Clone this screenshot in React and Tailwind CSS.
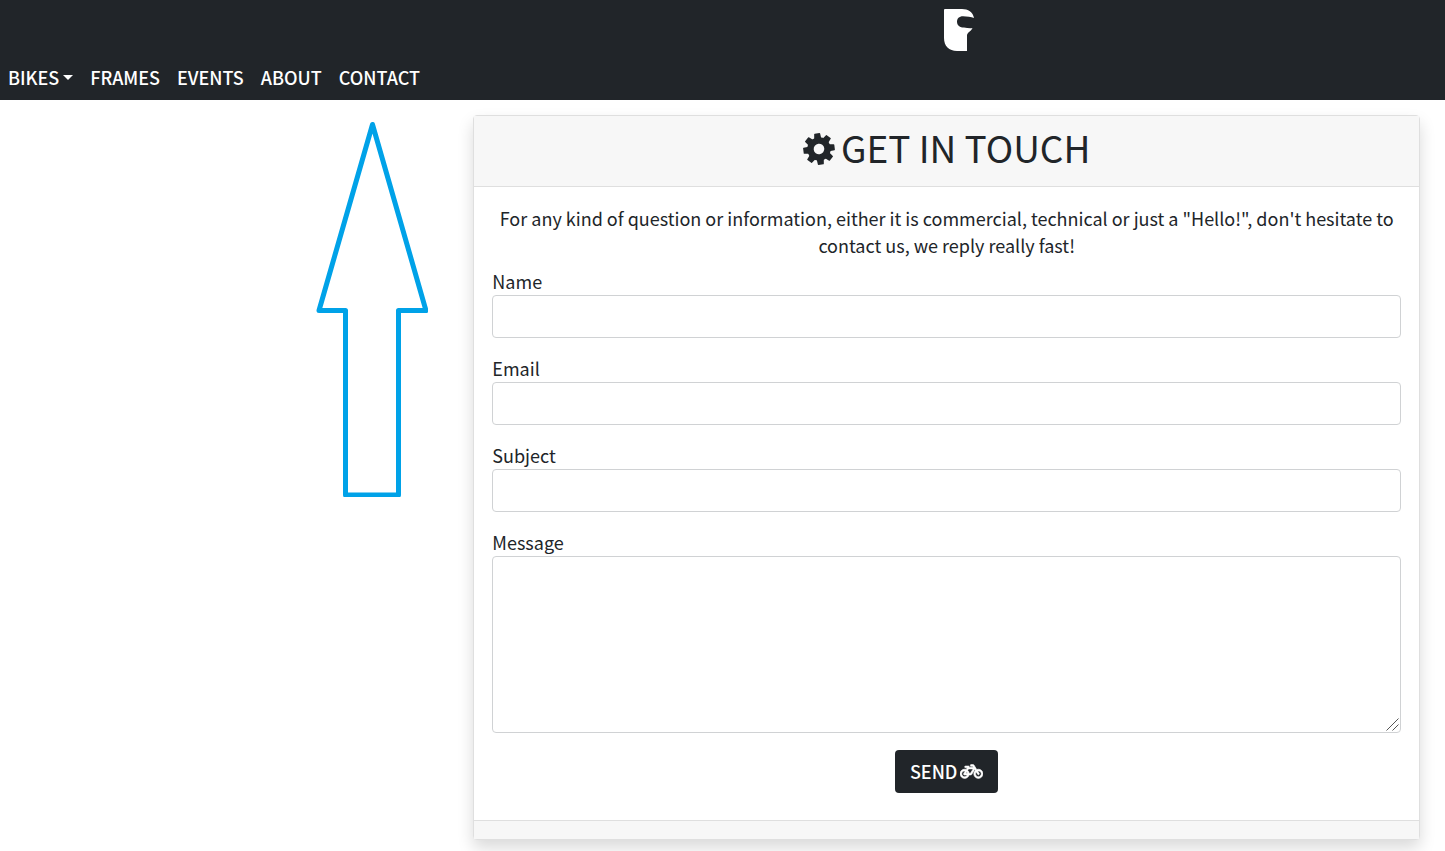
import { FaBicycle } from "react-icons/fa";

const links = ["FRAMES", "EVENTS", "ABOUT", "CONTACT"];
const fields = [
  { id: "name", label: "Name", type: "text" },
  { id: "email", label: "Email", type: "email" },
  { id: "subject", label: "Subject", type: "text" },
];
const teeth = [0, 45, 90, 135, 180, 225, 270, 315];

function Logo() {
  return (
    <svg viewBox="0 0 32 44" className="h-[44px] w-[32px]" fill="#fff" aria-hidden="true">
      <path d="M2 1H19C25 1 30 4 31 10C28 9 24 8.200 20 8.200C16 8.200 14 10.500 14 13.500C14 17.500 17 19.500 21 19.500C24 20 27 20.500 29.500 20C28.500 23 24 24.500 24 27.500V43H14C6 43 1 38 1 30V2Q1 1 2 1Z" />
    </svg>
  );
}

function Gear() {
  return (
    <svg viewBox="-16 -16 32 32" className="size-8" aria-hidden="true">
      <g transform="rotate(-7)" fill="currentColor">
        {teeth.map((angle) => (
          <path key={angle} transform={`rotate(${angle})`} d="M-3.600 -10L-3 -15.200Q-2.900 -15.700 -2.400 -15.700H2.400Q2.900 -15.700 3 -15.200L3.600 -10Z" />
        ))}
        <circle r="8.500" fill="none" stroke="currentColor" strokeWidth="6.400" />
      </g>
    </svg>
  );
}

function Arrow() {
  return (
    <svg viewBox="0 0 112 376" className="h-[376px] w-[112px]" fill="none" stroke="#00a2e8" strokeWidth="5" strokeLinejoin="round" aria-hidden="true">
      <path d="M56.500 3.500L110 189.500H82.500V374H29.500V189.500H3Z" />
    </svg>
  );
}

export default function App() {
  return (
    <div className="min-h-screen bg-white font-['Noto_Sans_CJK_SC','Noto_Sans',sans-serif] text-[18px] leading-[27px] text-[#212529]">
      <header className="bg-[#212529] font-medium text-white">
        <div className="flex justify-center pt-2 pb-1 pl-[32.800%]">
          <a href="#home" aria-label="Home">
            <Logo />
          </a>
        </div>
        <nav className="flex gap-[17px] px-2 pt-2 pb-[9px]">
          <button type="button" className="flex items-center gap-1">
            BIKES
            <svg viewBox="0 0 10 5" className="h-[5px] w-[10px]" fill="currentColor" aria-hidden="true">
              <path d="M0 0H10L5 5Z" />
            </svg>
          </button>
          {links.map((link) => (
            <a key={link} href={`#${link.toLowerCase()}`}>{link}</a>
          ))}
        </nav>
      </header>
      <main className="grid grid-cols-3 pr-[25px]">
        <div className="flex justify-end pt-[21px] pr-[45px]">
          <Arrow />
        </div>
        <section className="col-span-2 mt-[15px] mb-3 rounded border border-[#dfdfdf] bg-white shadow-[0_8px_16px_rgba(0,0,0,0.15)]">
          <header className="flex h-[71px] items-center justify-center gap-1.5 border-b border-[#dfdfdf] bg-[#f7f7f7] pb-1">
            <Gear />
            <h1 className="pb-1 text-[37px] leading-[48px]">GET IN TOUCH</h1>
          </header>
          <form className="flex flex-col px-[18px] pt-[18px] pb-[27px]" onSubmit={(e) => e.preventDefault()}>
            <p className="mb-[9px] text-center">
              For any kind of question or information, either it is commercial, technical or just a "Hello!", don't hesitate to contact us, we reply really fast!
            </p>
            {fields.map(({ id, label, type }) => (
              <div key={id} className="mb-[17px] flex flex-col">
                <label htmlFor={id}>{label}</label>
                <input id={id} type={type} className="h-[43px] rounded border border-[#d0d2d4] px-3" />
              </div>
            ))}
            <label htmlFor="message">Message</label>
            <div className="relative flex">
              <textarea id="message" className="h-[177px] w-full resize-none rounded border border-[#d0d2d4] px-3 py-1.5" />
              <svg viewBox="0 0 13 13" className="pointer-events-none absolute right-0.5 bottom-0.5 size-[13px]" stroke="#555" aria-hidden="true">
                <path d="M0.500 12.500L12.500 0.500M6.500 12.500L12.500 6.500" />
              </svg>
            </div>
            <button type="submit" className="mt-[17px] flex h-[43px] items-center gap-[3px] self-center rounded bg-[#212529] px-[15px] font-medium text-white">
              SEND
              <FaBicycle className="size-[23px] stroke-current stroke-[16]" aria-hidden="true" />
            </button>
          </form>
          <footer className="h-[19px] border-t border-[#dfdfdf] bg-[#f7f7f7]" />
        </section>
      </main>
    </div>
  );
}
